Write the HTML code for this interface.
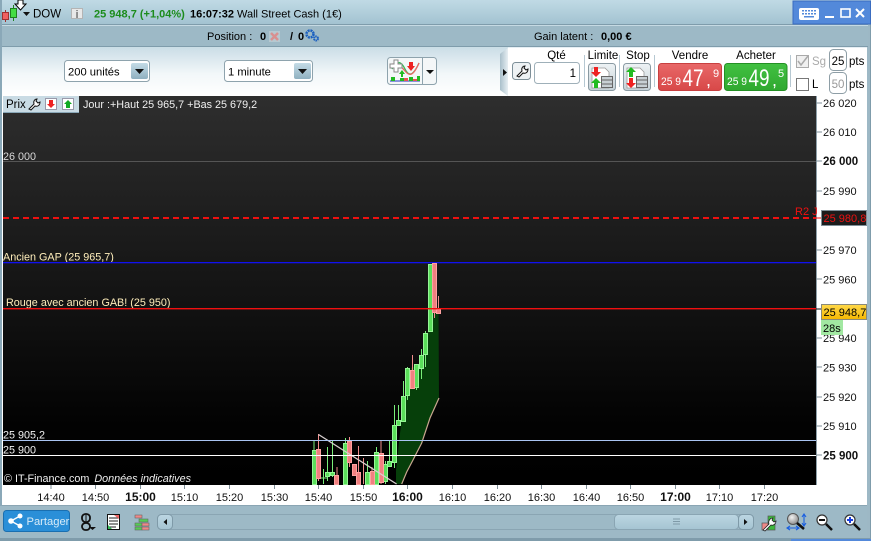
<!DOCTYPE html>
<html><head><meta charset="utf-8"><style>
html,body{margin:0;padding:0;background:#fff;overflow:hidden}
svg{display:block}
text{font-family:"Liberation Sans",sans-serif;font-size:11px;fill:#000}
.t{text-anchor:middle;font-size:11px;fill:#111}
.ax{font-size:11px;fill:#111}
.w{fill:#fff;font-size:10.8px}
</style></head><body>
<svg width="874" height="541" viewBox="0 0 874 541" xmlns="http://www.w3.org/2000/svg">
<defs>
<linearGradient id="top" x1="0" y1="0" x2="0" y2="1"><stop offset="0" stop-color="#c0dae5"/><stop offset="1" stop-color="#a3c3d1"/></linearGradient>
<linearGradient id="p" x1="0" y1="0" x2="0" y2="1"><stop offset="0" stop-color="#cadde6"/><stop offset=".55" stop-color="#f2f7f9"/><stop offset="1" stop-color="#fff"/></linearGradient>
<linearGradient id="ch" x1="0" y1="0" x2="0" y2="1"><stop offset="0" stop-color="#2e2e2e"/><stop offset=".85" stop-color="#020202"/><stop offset="1" stop-color="#000"/></linearGradient>
<linearGradient id="btn" x1="0" y1="0" x2="0" y2="1"><stop offset="0" stop-color="#c4dbe6"/><stop offset="1" stop-color="#8fb0c0"/></linearGradient>
<linearGradient id="red" x1="0" y1="0" x2="0" y2="1"><stop offset="0" stop-color="#e86868"/><stop offset="1" stop-color="#d84848"/></linearGradient>
<linearGradient id="gr" x1="0" y1="0" x2="0" y2="1"><stop offset="0" stop-color="#42c142"/><stop offset="1" stop-color="#2fa82f"/></linearGradient>
<linearGradient id="sc" x1="0" y1="0" x2="0" y2="1"><stop offset="0" stop-color="#bcd6e2"/><stop offset="1" stop-color="#a5c4d2"/></linearGradient>
<linearGradient id="tool" x1="0" y1="0" x2="0" y2="1"><stop offset="0" stop-color="#eef3f5"/><stop offset="1" stop-color="#c6d2d8"/></linearGradient>
<linearGradient id="gold" x1="0" y1="0" x2="0" y2="1"><stop offset="0" stop-color="#ffd84a"/><stop offset="1" stop-color="#f5b800"/></linearGradient>
<linearGradient id="tab" x1="0" y1="0" x2="1" y2="0"><stop offset="0" stop-color="#a9bfca"/><stop offset="1" stop-color="#e8eff3"/></linearGradient>
<radialGradient id="ball" cx=".4" cy=".35" r=".7"><stop offset="0" stop-color="#f2f2f2"/><stop offset="1" stop-color="#888"/></radialGradient>
</defs>

<!-- window backgrounds -->
<rect width="871" height="541" fill="#9db8c5"/>
<rect x="0" y="0" width="871" height="24" fill="url(#top)"/>
<rect x="0" y="24" width="868" height="1" fill="#7f9cab"/>
<rect x="0" y="25" width="868" height="1" fill="#c6dae3"/>
<rect x="0" y="26" width="868" height="20" fill="#9db9c6"/>
<rect x="0" y="46" width="868" height="1" fill="#7f9cab"/>
<rect x="2" y="47" width="865" height="49" fill="url(#p)"/>
<rect x="508" y="47.500" width="359" height="49" fill="#fff"/>
<rect x="0" y="0" width="2" height="541" fill="#8aa8b8"/>
<rect x="870" y="24" width="1" height="517" fill="#7f9cab"/>

<!-- title buttons -->
<rect x="793" y="1" width="77.500" height="23" fill="#5389da" stroke="#3a6cc0"/>
<rect x="799" y="8" width="20" height="12" rx="2" fill="#fff"/>
<g fill="#5389da"><rect x="802" y="10" width="2" height="1.500"/><rect x="805" y="10" width="2" height="1.500"/><rect x="808" y="10" width="2" height="1.500"/><rect x="811" y="10" width="2" height="1.500"/><rect x="814" y="10" width="2" height="1.500"/><rect x="802" y="13" width="2" height="1.500"/><rect x="805" y="13" width="2" height="1.500"/><rect x="808" y="13" width="2" height="1.500"/><rect x="811" y="13" width="2" height="1.500"/><rect x="814" y="13" width="2" height="1.500"/><rect x="804" y="16" width="10" height="1.500"/></g>
<rect x="825" y="16" width="9" height="2" fill="#fff"/>
<rect x="841" y="9" width="9" height="8" fill="none" stroke="#fff" stroke-width="1.600"/>
<path d="M856 9l8 8M864 9l-8 8" stroke="#fff" stroke-width="2" fill="none"/>

<!-- top row -->
<rect x="2.500" y="12.500" width="6" height="7" fill="#f06060" stroke="#a03030"/><path d="M5.500 10v3M5.500 20v2" stroke="#a03030"/>
<rect x="10.500" y="8.500" width="6" height="9" fill="#44dd44" stroke="#208020"/><path d="M13.500 5v3M13.500 17v4" stroke="#208020"/>
<path d="M23 12h7l-3.500 4z" fill="#111"/>
<path d="M18 0h5v4h3l-5.500 6-5.500-6h3z" fill="#fff" stroke="#000"/>
<text x="33" y="17.500" style="font-size:11.500px">DOW</text>
<rect x="71.500" y="8.500" width="11" height="10" fill="#e8e8e8" stroke="#b4b4b4"/><text x="77" y="18" text-anchor="middle" style="font-size:11px;font-weight:bold;fill:#777">i</text>
<text x="94" y="17.500" style="font-weight:bold;fill:#1c8c1c">25 948,7 (+1,04%)</text>
<text x="190" y="17.500" style="font-weight:bold">16:07:32</text>
<text x="237" y="17.500">Wall Street Cash (1€)</text>

<!-- second row -->
<text x="207" y="40">Position :</text>
<text x="260" y="40" style="font-weight:bold">0</text>
<rect x="269" y="31" width="11" height="11" fill="#b6c8d0"/><path d="M271 33l7 7M278 33l-7 7" stroke="#d89090" stroke-width="2.500"/>
<text x="290" y="40" style="font-weight:bold">/</text><text x="298" y="40" style="font-weight:bold">0</text>
<circle cx="310" cy="34" r="3.500" fill="none" stroke="#1a5fc0" stroke-width="2.500" stroke-dasharray="2 .8"/>
<circle cx="316" cy="38.500" r="2" fill="none" stroke="#1a5fc0" stroke-width="2" stroke-dasharray="1.500 .6"/>
<text x="534" y="40">Gain latent :</text>
<text x="601" y="40" style="font-weight:bold">0,00 €</text>

<!-- selects -->
<rect x="64.500" y="60.500" width="85" height="21" rx="3" fill="#fff" stroke="#8ea3ad"/>
<text x="68" y="75.500" style="font-size:11.200px">200 unités</text>
<rect x="131" y="63" width="17" height="16" rx="2" fill="url(#btn)"/><path d="M135 69h9l-4.500 5z" fill="#111"/>
<rect x="224.500" y="60.500" width="88" height="21" rx="3" fill="#fff" stroke="#8ea3ad"/>
<text x="228" y="75.500" style="font-size:11.200px">1 minute</text>
<rect x="294" y="63" width="17" height="16" rx="2" fill="url(#btn)"/><path d="M298 69h9l-4.500 5z" fill="#111"/>
<rect x="387.500" y="57.500" width="49" height="27" rx="3" fill="#f4f7f8" stroke="#8ea3ad"/>
<path d="M422.500 58v26" stroke="#8ea3ad"/>
<path d="M426 70h8l-4 4z" fill="#111"/>
<path d="M390 81h30" stroke="#2030c0"/>
<g fill="#22bb22"><rect x="391" y="77" width="4" height="4"/><rect x="400" y="78" width="4" height="3"/><rect x="409" y="77" width="4" height="4"/><rect x="417" y="76" width="3" height="5"/></g><rect x="404" y="78" width="4" height="3" fill="#ea5555"/><rect x="413" y="79" width="4" height="2" fill="#ea5555"/>
<path d="M392 69c6-9 9-8 13 0s8 7 14-6" fill="none" stroke="#33bb55" stroke-width="1.300"/>
<path d="M392 64c6 0 9 2 13 7s8 6 14-8" fill="none" stroke="#ee6666" stroke-width="1.300"/>
<path d="M390 64h4v-4h4v4h4v4h-4v4h-4v-4h-4z" fill="#fff" stroke="#888"/>
<path d="M409 62h4v4h2l-4 5-4-5h2z" fill="#ee2222"/>
<path d="M401 77v-3h-2l3-4 3 4h-2v3z" fill="#22bb22"/>

<!-- right panel -->
<path d="M508 48l-7 5-1 1v36l8 6z" fill="url(#tab)"/>
<path d="M503 69l4 3.500-4 3.500z" fill="#111"/>
<rect x="512.500" y="62.500" width="18" height="17" rx="3" fill="#eef2f4" stroke="#7d8f98"/>
<path d="M517 76l5-5c-1-3 1-5 3-5l-1 2 2 2 2-1c0 3-2 5-5 4l-4 4z" fill="#fff" stroke="#111"/>
<text x="556.500" y="59" text-anchor="middle" style="font-size:11.500px">Qté</text>
<rect x="534.500" y="62.500" width="45" height="21" rx="3" fill="#fff" stroke="#9fb0b9"/>
<text x="576" y="77" text-anchor="end" style="font-size:11.500px">1</text>
<path d="M584.500 55v32" stroke="#b6c8d2"/><path d="M619.500 55v32" stroke="#b6c8d2"/><path d="M654.500 55v32" stroke="#b6c8d2"/>
<text x="603" y="59" text-anchor="middle" style="font-size:11.500px">Limite</text>
<text x="638" y="59" text-anchor="middle" style="font-size:11.500px">Stop</text>
<rect x="588.500" y="63.500" width="27" height="27" rx="3" fill="url(#tool)" stroke="#8a9aa2"/>
<rect x="623.500" y="63.500" width="27" height="27" rx="3" fill="url(#tool)" stroke="#8a9aa2"/>
<path d="M592 68h13l4 4v16h-17z" fill="#fff" stroke="#999" stroke-width=".8"/>
<path d="M627 68h13l4 4v16h-17z" fill="#fff" stroke="#999" stroke-width=".8"/>
<rect x="601.500" y="76.500" width="11" height="11" fill="#c8d0d4" stroke="#666"/><path d="M602 80h10M602 84h10" stroke="#666"/>
<rect x="636.500" y="76.500" width="11" height="11" fill="#c8d0d4" stroke="#666"/><path d="M637 80h10M637 84h10" stroke="#666"/>
<path d="M594 67h4v5h3l-5 5-5-5h3z" fill="#ee2222"/><path d="M594 88v-5h-3l5-5 5 5h-3v5z" fill="#22bb22"/>
<path d="M629 77v-5h-3l5-5 5 5h-3v5z" fill="#22bb22"/><path d="M629 78h4v5h3l-5 5-5-5h3z" fill="#ee2222"/>

<text x="690" y="59" text-anchor="middle" style="font-size:11.500px">Vendre</text>
<text x="756" y="59" text-anchor="middle" style="font-size:11.500px">Acheter</text>
<rect x="658.500" y="63.500" width="63" height="27" rx="3" fill="url(#red)" stroke="#c84040"/>
<rect x="724.500" y="63.500" width="62.500" height="27" rx="3" fill="url(#gr)" stroke="#249024"/>
<text x="661" y="85" textLength="20" lengthAdjust="spacingAndGlyphs" style="font-size:11px;fill:#fff">25 9</text>
<text x="682.500" y="86" textLength="21" lengthAdjust="spacingAndGlyphs" style="font-size:24px;fill:#fff">47</text>
<text x="706" y="86" style="font-size:18px;fill:#fff">,</text>
<text x="713" y="77" style="font-size:11px;fill:#fff">9</text>
<text x="727" y="85" textLength="20" lengthAdjust="spacingAndGlyphs" style="font-size:11px;fill:#fff">25 9</text>
<text x="748.500" y="86" textLength="21" lengthAdjust="spacingAndGlyphs" style="font-size:24px;fill:#fff">49</text>
<text x="772" y="86" style="font-size:18px;fill:#fff">,</text>
<text x="778" y="77" style="font-size:11px;fill:#fff">5</text>
<path d="M790.500 55v32" stroke="#b6c8d2"/>
<rect x="796.500" y="55.500" width="12" height="12" fill="#f0f0f0" stroke="#aaa"/><path d="M798 61l3 4 7-9" fill="none" stroke="#aaa" stroke-width="1.500"/>
<text x="812" y="65" style="fill:#aaa;font-size:11.500px">Sg</text>
<rect x="796.500" y="78.500" width="12" height="12" fill="#fff" stroke="#777"/>
<text x="812" y="88" style="font-size:11.500px">L</text>
<rect x="829.500" y="49.500" width="17" height="21" rx="4" fill="#fff" stroke="#8e9ea6"/>
<text x="838" y="65" text-anchor="middle" style="font-size:11.500px">25</text>
<text x="849" y="65" style="font-size:11.500px">pts</text>
<rect x="829.500" y="72.500" width="17" height="21" rx="4" fill="#fff" stroke="#8e9ea6"/>
<text x="838" y="88" text-anchor="middle" style="fill:#999;font-size:11.500px">50</text>
<text x="849" y="88" style="font-size:11.500px">pts</text>

<!-- chart -->
<rect x="2" y="96" width="865" height="409" fill="#fff"/>
<rect x="3" y="96" width="813" height="389" fill="url(#ch)"/>
<path d="M816.500 96v389" stroke="#8ea0aa"/>
<rect x="3" y="96" width="76" height="17" fill="#c9dbe4"/>
<rect x="3" y="112" width="76" height="1" fill="#8aa8b8"/>
<text x="6" y="108" style="font-size:11.500px">Prix</text>
<path d="M29 109l5-5c-1-3 1-5 3-5l-1 2 2 2 2-1c0 3-2 5-5 4l-4 4z" fill="#fff" stroke="#111"/>
<rect x="45.500" y="98.500" width="11" height="11" fill="#fff" stroke="#99a"/><path d="M49 100h4v4h2l-4 4-4-4h2z" fill="#ee2222"/>
<rect x="62.500" y="98.500" width="11" height="11" fill="#fff" stroke="#99a"/><path d="M66 108v-4h-2l4-4 4 4h-2v4z" fill="#11aa22"/>
<text x="83" y="108" style="font-size:10.800px;fill:#f0f0f0">Jour :+Haut 25 965,7 +Bas 25 679,2</text>

<!-- h-lines -->
<rect x="3" y="161" width="813" height="1" fill="#555"/>
<text class="w" x="3" y="160" style="fill:#d8d8d8">26 000</text>
<path d="M3 218H816" stroke="#ee1111" stroke-width="2" stroke-dasharray="6 4"/>
<text x="795" y="215" style="fill:#ee1111;font-size:11px">R2 J</text>
<text class="w" x="3" y="260.500" style="fill:#ffeebb">Ancien GAP (25 965,7)</text>
<rect x="3" y="262" width="813" height="1.300" fill="#1111ee"/>
<text class="w" x="6" y="306" style="fill:#ffeebb">Rouge avec ancien GAB! (25 950)</text>

<!-- area -->
<path d="M396 484L396 470 401 424 406 396 411 368 419 364 424 350 428 330 428 300 438.500 308 439 398 430 418 421.700 443 413 460 406.700 472 401.700 484Z" fill="#063f0a"/>
<path d="M439 398L430 418 421.700 443 413 460 406.700 472 401.700 484" fill="none" stroke="#c9a78f" stroke-width="1.200"/>

<!-- candles -->
<g stroke="#f08c8c" fill="#f08c8c">
<path d="M318.500 434V481M337 467V484M349.500 437V467M363.500 458V484M358.500 446V484M372 467V484M381 441V484M434.500 263V318M438.500 296V314M412.500 355V388"/>
</g>
<g stroke="#79ee79" fill="none">
<path d="M314 441V484M323.500 469V484M320 478h7M327.500 447V481M332.500 441V477M345.500 438V484M367.500 461V484M376.500 447V484M385.500 461V484M389.500 441V467M394.500 405V468M398.500 405V425M403.500 381V422M407.500 367V400M416.500 364V390M421.500 349V379M425.500 331V367"/>
</g>
<g fill="#5ade5a" stroke="#96f596">
<rect x="312.500" y="450.500" width="4" height="34"/>
<rect x="325.500" y="472.500" width="4" height="4"/>
<rect x="330.500" y="472.500" width="4" height="3"/>
<rect x="343.500" y="443.500" width="4" height="41"/>
<rect x="365.500" y="472.500" width="4" height="12"/>
<rect x="374.500" y="452.500" width="4" height="32"/>
<rect x="383.500" y="464.500" width="4" height="17"/>
<rect x="387.500" y="461.500" width="4" height="5"/>
<rect x="392.500" y="425.500" width="4" height="37"/>
<rect x="396.500" y="420.500" width="4" height="5"/>
<rect x="401.500" y="396.500" width="4" height="25"/>
<rect x="405.500" y="368.500" width="4" height="27"/>
<rect x="414.500" y="364.500" width="4" height="23"/>
<rect x="419.500" y="355.500" width="4" height="13"/>
<rect x="423.500" y="333.500" width="4" height="21"/>
<rect x="428.500" y="264.500" width="4" height="67"/>
</g>
<g fill="#f08080" stroke="#ffa0a0">
<rect x="316.500" y="449.500" width="4" height="29"/>
<rect x="334.500" y="475.500" width="4" height="9"/>
<rect x="347.500" y="441.500" width="4" height="21"/>
<rect x="352.500" y="464.500" width="4" height="11"/>
<rect x="356.500" y="472.500" width="4" height="12"/>
<rect x="370.500" y="471.500" width="4" height="13"/>
<rect x="379.500" y="453.500" width="4" height="29"/>
<rect x="410.500" y="370.500" width="4" height="18"/>
<rect x="432.500" y="263.500" width="4" height="49"/>
<rect x="436.500" y="309.500" width="4" height="4"/>
</g>
<path d="M318.500 434.500L396.600 484" stroke="#d8d0d0" stroke-width="1.300" fill="none"/>

<!-- lines on top -->
<rect x="3" y="308" width="813" height="1.400" fill="#f01010"/>
<rect x="3" y="440" width="813" height="1" fill="#a9c4f2"/>
<rect x="3" y="455" width="813" height="1" fill="#fff"/>
<text class="w" x="3" y="438.500" style="fill:#f2f2f2">25 905,2</text>
<text class="w" x="3" y="453.500" style="fill:#f2f2f2">25 900</text>
<text class="w" x="4" y="482" style="fill:#eee">© IT-Finance.com <tspan dx="2" font-style="italic">Données indicatives</tspan></text>

<!-- y axis -->
<g stroke="#7f8f98"><path d="M816 103h6M816 132h6M816 161h6M816 191h6M816 250h6M816 279h6M816 338h6M816 367h6M816 397h6M816 426h6M816 455h6"/></g>
<text class="ax" x="823" y="107">26 020</text>
<text class="ax" x="823" y="136">26 010</text>
<text class="ax" x="823" y="165" style="font-weight:bold;font-size:11.500px">26 000</text>
<text class="ax" x="823" y="195">25 990</text>
<text class="ax" x="823" y="254">25 970</text>
<text class="ax" x="823" y="283.500">25 960</text>
<text class="ax" x="823" y="313">25 950</text>
<text class="ax" x="823" y="342">25 940</text>
<text class="ax" x="823" y="371.500">25 930</text>
<text class="ax" x="823" y="401">25 920</text>
<text class="ax" x="823" y="430">25 910</text>
<text class="ax" x="823" y="459.500" style="font-weight:bold;font-size:11.500px">25 900</text>
<path d="M816 218h6" stroke="#ee1111"/><path d="M816 309h6" stroke="#111"/>
<rect x="821.500" y="210.500" width="45" height="15" fill="#1c1c1c" stroke="#7f8f98"/>
<text x="823.500" y="222" style="fill:#ee1111">25 980,8</text>
<rect x="821.500" y="304.500" width="45" height="15" fill="url(#gold)" stroke="#8a8a7a"/>
<text x="823.500" y="316">25 948,7</text>
<rect x="821" y="320" width="22" height="15" fill="#a2e8a2"/>
<text x="823" y="332">28s</text>

<!-- x axis -->
<g stroke="#7f8f98"><path d="M51 485v4M95.500 485v4M140.500 485v4M184.500 485v4M229.500 485v4M274.500 485v4M318.500 485v4M363.500 485v4M407.500 485v4M452.500 485v4M497.500 485v4M541.500 485v4M586.500 485v4M630.500 485v4M675.500 485v4M719.500 485v4M764.500 485v4"/></g>
<text class="t" x="51" y="501">14:40</text><text class="t" x="95.500" y="501">14:50</text>
<text class="t" x="140.500" y="501" style="font-weight:bold;font-size:12px">15:00</text>
<text class="t" x="184.500" y="501">15:10</text><text class="t" x="229.500" y="501">15:20</text><text class="t" x="274.500" y="501">15:30</text><text class="t" x="318.500" y="501">15:40</text><text class="t" x="363.500" y="501">15:50</text>
<text class="t" x="407.500" y="501" style="font-weight:bold;font-size:12px">16:00</text>
<text class="t" x="452.500" y="501">16:10</text><text class="t" x="497.500" y="501">16:20</text><text class="t" x="541.500" y="501">16:30</text><text class="t" x="586.500" y="501">16:40</text><text class="t" x="630.500" y="501">16:50</text>
<text class="t" x="675.500" y="501" style="font-weight:bold;font-size:12px">17:00</text>
<text class="t" x="719.500" y="501">17:10</text><text class="t" x="764.500" y="501">17:20</text>

<!-- bottom toolbar -->
<rect x="2" y="505" width="865" height="1" fill="#8aa5b3"/>
<rect x="0" y="506" width="867" height="32" fill="#9db9c6"/>
<rect x="0" y="538" width="871" height="3" fill="#7f9cab"/>
<rect x="791" y="539" width="80" height="2" fill="#5389da"/>
<rect x="3.500" y="510.500" width="66" height="21" rx="3" fill="#2a8fd8" stroke="#1a6fb0"/>
<path d="M11 521l9-5M11 521l9 5" stroke="#fff" stroke-width="1.300"/>
<circle cx="11" cy="521" r="2.800" fill="#fff"/><circle cx="20" cy="516" r="2.500" fill="#fff"/><circle cx="20" cy="526" r="2.500" fill="#fff"/>
<text x="26.500" y="525" style="fill:#d8ecf8;font-size:11.200px">Partager</text>
<rect x="82" y="514" width="8" height="8" rx="3.500" fill="none" stroke="#111" stroke-width="1.800"/><path d="M86 515v6" stroke="#111"/>
<rect x="82" y="523" width="8" height="7" rx="3.500" fill="none" stroke="#111" stroke-width="1.800"/>
<path d="M89 527h7l-3.500 3z" fill="#111"/>
<rect x="107.500" y="514.500" width="12" height="15" fill="#fff" stroke="#111"/><path d="M109 518h9M109 521h9M109 524h9M109 527h7" stroke="#222"/><path d="M114 515h5v4z" fill="#e66"/><path d="M108 529v-4l4 4z" fill="#3b5"/>
<g stroke="#666" stroke-width=".6"><rect x="135" y="515" width="7" height="3" fill="#e88"/><rect x="139" y="519" width="9" height="3" fill="#5c5"/><rect x="135" y="523" width="7" height="3" fill="#5c5"/><rect x="142" y="523" width="7" height="3" fill="#e88"/><rect x="135" y="527" width="7" height="3" fill="#5c5"/><rect x="142" y="527" width="7" height="3" fill="#e88"/></g>
<!-- scrollbar -->
<rect x="157.500" y="514.500" width="596" height="15" rx="4" fill="#9db9c6" stroke="#8aa5b3"/>
<rect x="157.500" y="514.500" width="15" height="15" rx="4" fill="url(#sc)" stroke="#7f9aa8"/><path d="M167 519v6l-3.500-3z" fill="#111"/>
<rect x="614.500" y="514.500" width="124" height="15" rx="4" fill="url(#sc)" stroke="#8aa5b3"/><path d="M673 519h7M673 521.500h7M673 524h7" stroke="#7f9aa8"/>
<rect x="738.500" y="514.500" width="15" height="15" rx="4" fill="url(#sc)" stroke="#7f9aa8"/><path d="M744 519v6l3.500-3z" fill="#111"/>
<!-- right icons -->
<rect x="768" y="516" width="7" height="14" fill="#3cb83c" stroke="#555" stroke-width=".7"/><rect x="762" y="523" width="6" height="7" fill="#e88" stroke="#555" stroke-width=".7"/>
<path d="M763 530l6-6c-1-3 1-6 4-6l-1 2 2 2 2-1c0 3-3 5-5 4l-6 6z" fill="#fff" stroke="#222" stroke-width=".8"/>
<circle cx="793" cy="519" r="5.500" fill="url(#ball)" stroke="#555"/><path d="M797 523l7 6" stroke="#111" stroke-width="2.500"/>
<path d="M804 515v10M802 517l2-3 2 3M802 523l2 3 2-3M788 528h10M790 526l-3 2 3 2M796 526l3 2-3 2" stroke="#1a5fe0" fill="none" stroke-width="1.100"/>
<circle cx="822" cy="520" r="5" fill="#fff" stroke="#333" stroke-width="1.200"/><path d="M819 520h6" stroke="#111" stroke-width="2"/><path d="M826 524l6 6" stroke="#111" stroke-width="2.500"/>
<circle cx="850" cy="520" r="5" fill="#fff" stroke="#333" stroke-width="1.200"/><path d="M847 520h6M850 517v6" stroke="#1a3fe0" stroke-width="2"/><path d="M854 524l6 6" stroke="#111" stroke-width="2.500"/>
</svg>
</body></html>
